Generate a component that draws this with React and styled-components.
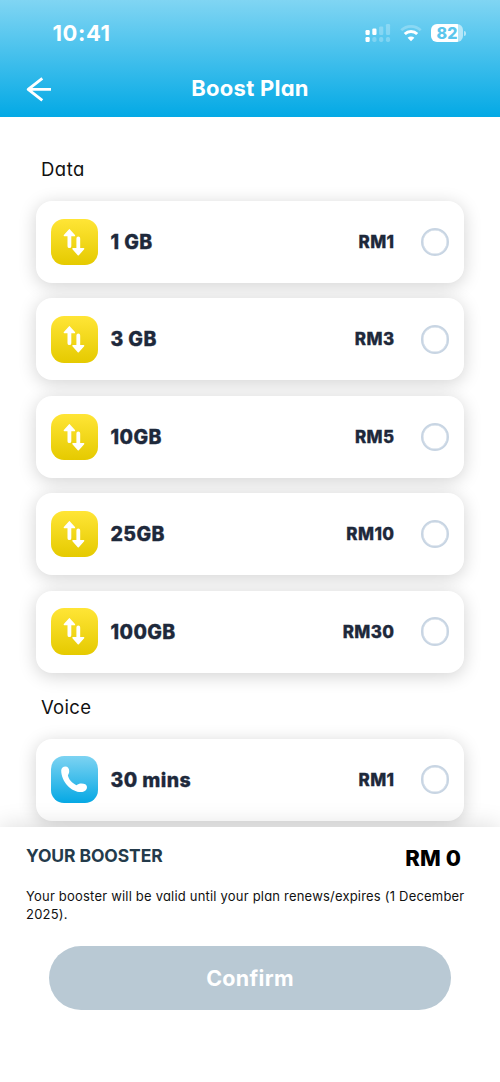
import { useState } from 'react'
import styled, { createGlobalStyle } from 'styled-components'

const GlobalStyle = createGlobalStyle`
  * {
    box-sizing: border-box;
  }
  body {
    margin: 0;
    background: #fff;
    font-family: Inter, 'Liberation Sans', sans-serif;
  }
`
const Screen = styled.div`
  width: 500px;
  height: 1082px;
  display: flex;
  flex-direction: column;
  overflow: hidden;
  background: #fff;
`
const Header = styled.header`
  flex: none;
  height: 116.5px;
  background: linear-gradient(180deg, #80d5f3 0%, #03a9e5 100%);
  color: #fff;
`
const StatusBar = styled.div`
  height: 66px;
  padding: 0 34px 0 52.5px;
  display: flex;
  align-items: center;
  justify-content: space-between;
`
const Time = styled.span`
  font-size: 22px;
  font-weight: 700;
  letter-spacing: 0.6px;
  line-height: 26px;
`
const StatusIcons = styled.div`
  display: flex;
  align-items: center;
  gap: 9px;

  svg {
    display: block;
  }
`
const Battery = styled.div`
  display: flex;
  align-items: center;
  gap: 1px;
`
const BatteryBody = styled.div`
  width: 32px;
  height: 18px;
  border-radius: 6px;
  background: linear-gradient(90deg, #fff 84%, rgba(255, 255, 255, 0.55) 84%);
  color: #5bc6ed;
  font-size: 16px;
  font-weight: 800;
  line-height: 18.5px;
  text-align: center;
`
const BatteryTip = styled.div`
  width: 2px;
  height: 5px;
  border-radius: 0 2px 2px 0;
  background: rgba(255, 255, 255, 0.55);
`
const NavBar = styled.div`
  height: 45px;
  padding: 0 26px;
  display: grid;
  grid-template-columns: 26px 1fr 26px;
  align-items: center;
`
const BackButton = styled.button`
  display: flex;
  padding: 0;
  border: none;
  background: transparent;
  cursor: pointer;
`
const Title = styled.h1`
  margin: 0;
  padding-bottom: 2px;
  font-size: 22px;
  font-weight: 700;
  font-feature-settings: 'cv11';
  letter-spacing: 0.25px;
  line-height: 30px;
  text-align: center;
`
const Content = styled.main`
  flex: 1;
  min-height: 0;
  overflow: hidden;
  padding: 37.5px 36px 0;
`
const Section = styled.section`
  margin-bottom: 19px;
`
const SectionTitle = styled.h2`
  margin: 0 0 17px 5px;
  color: #111;
  font-size: 18.5px;
  font-weight: 400;
  font-feature-settings: 'cv11';
  line-height: 30px;
  letter-spacing: ${(props) => props.$spacing}px;
`
const Cards = styled.div`
  display: flex;
  flex-direction: column;
  gap: 15.4px;
`
const Card = styled.div`
  height: 82px;
  padding: 0 15px;
  display: flex;
  align-items: center;
  border-radius: 16px;
  background: #fff;
  box-shadow: 0 3px 18px rgba(0, 0, 0, 0.18);
  cursor: pointer;
`
const IconTile = styled.div`
  width: 46.5px;
  height: 46.5px;
  margin-right: 13px;
  border-radius: 13px;
  background: ${(props) =>
    props.$kind === 'voice'
      ? 'linear-gradient(180deg, #7dd3f2, #05a8e4)'
      : 'linear-gradient(180deg, #ffe536, #e5ca00)'};

  svg {
    display: block;
  }
`
const PlanName = styled.span`
  flex: 1;
  color: #1e293b;
  font-size: 19.5px;
  font-weight: 800;
  letter-spacing: 0.4px;
  -webkit-text-stroke: 0.3px #1e293b;
`
const Price = styled.span`
  margin-right: 26px;
  color: #1e293b;
  font-size: 17px;
  font-weight: 800;
  letter-spacing: 0.4px;
  -webkit-text-stroke: 0.3px #1e293b;
`
const Radio = styled.span`
  width: 28.5px;
  height: 28.5px;
  border: 2.5px solid #c8d5e3;
  border-radius: 50%;
  box-shadow: inset 0 0 0 0.5px #c8d5e3;
  background: ${(props) => (props.$checked ? '#03a9e5' : '#fff')};
`
const Footer = styled.footer`
  position: relative;
  flex: none;
  height: 255.5px;
  padding: 13.5px 26px 0;
  background: #fff;
  box-shadow: 0 -2px 22px rgba(0, 0, 0, 0.13);
`
const Summary = styled.div`
  display: flex;
  justify-content: space-between;
  padding-right: 13px;
`
const SummaryTitle = styled.strong`
  color: #243b4b;
  font-size: 17.5px;
  font-weight: 700;
  letter-spacing: -0.1px;
  line-height: 31px;
`
const Total = styled.strong`
  padding-top: 2px;
  color: #000;
  font-size: 22px;
  font-weight: 800;
  letter-spacing: 0.1px;
  line-height: 32px;
`
const Note = styled.p`
  margin: 13px 0 0;
  color: #111;
  font-size: 13px;
  font-feature-settings: 'cv11';
  letter-spacing: 0.2px;
  line-height: 18px;
  white-space: nowrap;
`
const ConfirmButton = styled.button`
  display: block;
  width: 402px;
  height: 64px;
  margin: 23px auto 0;
  border: none;
  border-radius: 32px;
  background: #b9c9d4;
  color: #fff;
  font-family: inherit;
  font-size: 21.5px;
  font-weight: 700;
  letter-spacing: 0.3px;
`

const Signal = () => (
  <svg width="26" height="20" viewBox="0 0 26 20" fill="#fff">
    <rect x="0.5" y="7" width="4.2" height="5" rx="1.2" />
    <rect x="7.3" y="5.5" width="4.2" height="6.5" rx="1.2" />
    <rect x="14.1" y="3.5" width="4.2" height="8.5" rx="1.2" opacity="0.25" />
    <rect x="20.9" y="1" width="4.2" height="11" rx="1.2" opacity="0.25" />
    <rect x="0.5" y="14" width="4.2" height="5" rx="1.2" />
    <rect x="7.3" y="14" width="4.2" height="5" rx="1.8" opacity="0.25" />
    <rect x="14.1" y="14" width="4.2" height="5" rx="1.8" opacity="0.25" />
    <rect x="20.9" y="14" width="4.2" height="5" rx="1.8" opacity="0.25" />
  </svg>
)

const Wifi = () => (
  <svg width="22" height="18" viewBox="0 0 22 18" fill="none">
    <path d="M1.3 6.3a13.8 13.8 0 0 1 19.4 0" stroke="#fff" strokeOpacity="0.25" strokeWidth="2.8" />
    <path d="M4.8 10a8.9 8.9 0 0 1 12.4 0" stroke="#fff" strokeWidth="3" />
    <path d="M11 17.3l-3.4-3.5a4.8 4.8 0 0 1 6.8 0z" fill="#fff" />
  </svg>
)

const BackArrow = () => (
  <svg width="26" height="26" viewBox="0 0 26 26" fill="none" stroke="#fff" strokeWidth="2.9">
    <path d="M25 13.4H2M16.3 2.4L2.2 13.4l14.1 11" strokeLinejoin="round" />
  </svg>
)

const DataIcon = () => (
  <svg width="46.5" height="46.5" viewBox="0 0 46.5 46.5" fill="#fff" stroke="#fff" strokeLinecap="round" strokeLinejoin="round">
    <path d="M18.4 16v11.2M27.3 19.5v11" strokeWidth="3.8" fill="none" />
    <path d="M18.4 10.9l5 5.7h-10zM27.3 35.7l5.3-6h-10.6z" strokeWidth="1.5" />
  </svg>
)

const PhoneIcon = () => (
  <svg width="46.5" height="46.5" viewBox="0 0 46.5 46.5" fill="#fff">
    <path d="M10.2 14.2c.2-2.2 2-3.8 4.2-3.8 2.3 0 3.8 2 3.8 4.6 0 1.7-.5 3-1.3 4.3.7 4.2 4.2 7.8 8.5 10 1.6-1 3-1.7 5-1.7 3.2 0 5.5 1.1 5.6 3.5.1 2.5-1.7 4.5-4.5 4.9C21.5 37.2 10.2 26.5 10.2 14.2z" />
  </svg>
)

const sections = [
  {
    title: 'Data',
    kind: 'data',
    spacing: 0.5,
    plans: [
      { name: '1 GB', price: 'RM1' },
      { name: '3 GB', price: 'RM3' },
      { name: '10GB', price: 'RM5' },
      { name: '25GB', price: 'RM10' },
      { name: '100GB', price: 'RM30' },
    ],
  },
  {
    title: 'Voice',
    kind: 'voice',
    spacing: 0.3,
    plans: [{ name: '30 mins', price: 'RM1' }],
  },
]

const App = () => {
  const [selected, setSelected] = useState(null)

  return (
    <Screen>
      <GlobalStyle />
      <Header>
        <StatusBar>
          <Time>10:41</Time>
          <StatusIcons>
            <Signal />
            <Wifi />
            <Battery>
              <BatteryBody>82</BatteryBody>
              <BatteryTip />
            </Battery>
          </StatusIcons>
        </StatusBar>
        <NavBar>
          <BackButton aria-label="Back">
            <BackArrow />
          </BackButton>
          <Title>Boost Plan</Title>
        </NavBar>
      </Header>
      <Content>
        {sections.map((section) => (
          <Section key={section.title}>
            <SectionTitle $spacing={section.spacing}>{section.title}</SectionTitle>
            <Cards>
              {section.plans.map((plan) => (
                <Card key={plan.name} onClick={() => setSelected(plan.name)}>
                  <IconTile $kind={section.kind}>
                    {section.kind === 'voice' ? <PhoneIcon /> : <DataIcon />}
                  </IconTile>
                  <PlanName>{plan.name}</PlanName>
                  <Price>{plan.price}</Price>
                  <Radio $checked={selected === plan.name} />
                </Card>
              ))}
            </Cards>
          </Section>
        ))}
      </Content>
      <Footer>
        <Summary>
          <SummaryTitle>YOUR BOOSTER</SummaryTitle>
          <Total>RM 0</Total>
        </Summary>
        <Note>
          Your booster will be valid until your plan renews/expires (1 December
          <br />
          2025).
        </Note>
        <ConfirmButton>Confirm</ConfirmButton>
      </Footer>
    </Screen>
  )
}

export default App
